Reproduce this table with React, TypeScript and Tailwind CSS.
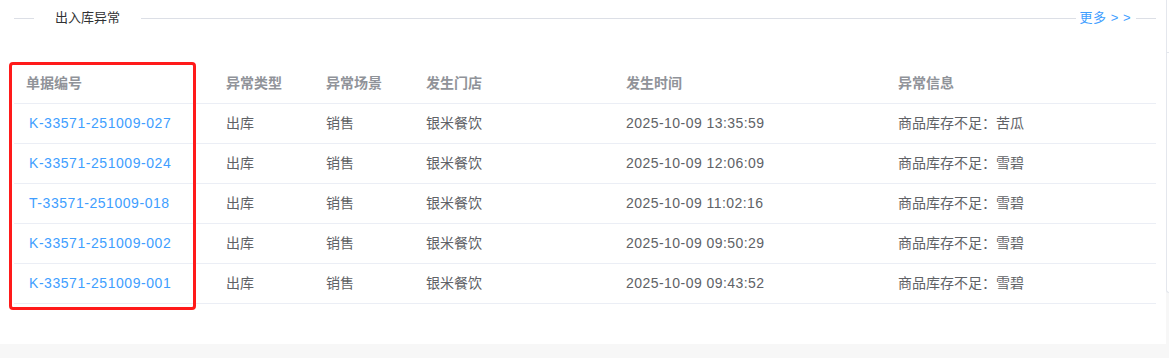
import React from 'react';

const rows = [
  { no: 'K-33571-251009-027', time: '2025-10-09 13:35:59', info: '商品库存不足：苦瓜' },
  { no: 'K-33571-251009-024', time: '2025-10-09 12:06:09', info: '商品库存不足：雪碧' },
  { no: 'T-33571-251009-018', time: '2025-10-09 11:02:16', info: '商品库存不足：雪碧' },
  { no: 'K-33571-251009-002', time: '2025-10-09 09:50:29', info: '商品库存不足：雪碧' },
  { no: 'K-33571-251009-001', time: '2025-10-09 09:43:52', info: '商品库存不足：雪碧' },
];

const cols = ['w-[200px]', 'w-[100px]', 'w-[100px]', 'w-[200px]', 'w-[272px]', 'flex-1'];
const heads = ['单据编号', '异常类型', '异常场景', '发生门店', '发生时间', '异常信息'];

export default function App() {
  return (
    <div
      className="w-[1169px] h-[358px] bg-[#f7f7f7] overflow-hidden"
      style={{ fontFamily: '"Liberation Sans", "Noto Sans CJK SC", sans-serif' }}
    >
      <div className="flex h-[344px]">
        <div className="relative w-[1166px] bg-white pl-[14px] pr-[10px]">
          {/* section title */}
          <div className="flex items-center h-[36px]">
            <div className="w-[20px] h-px bg-[#dcdfe6]" />
            <span className="ml-[21px] mr-[21px] text-[13px] text-[#303133]">出入库异常</span>
            <div className="flex-1 h-px bg-[#dcdfe6]" />
            <span className="ml-[4px] mr-[5px] text-[13px] text-[#409eff] tracking-[0.5px]">更多 &gt; &gt;</span>
            <div className="w-[20px] h-px bg-[#dcdfe6]" />
          </div>

          {/* table */}
          <div className="mt-[28px] text-[14px]">
            <div className="flex h-[40px] items-center border-b border-[#ebeef5] font-bold text-[#909399]">
              {heads.map((h, i) => (
                <div key={h} className={`${cols[i]} px-[12px]`}>{h}</div>
              ))}
            </div>
            {rows.map(r => (
              <div key={r.no} className="flex h-[40px] items-center border-b border-[#ebeef5] text-[#606266]">
                <div className={`${cols[0]} px-[12px]`}>
                  <span className="ml-[3px] text-[#409eff] tracking-[0.55px]">{r.no}</span>
                </div>
                <div className={`${cols[1]} px-[12px]`}>出库</div>
                <div className={`${cols[2]} px-[12px]`}>销售</div>
                <div className={`${cols[3]} px-[12px]`}>银米餐饮</div>
                <div className={`${cols[4]} px-[12px] tracking-[0.45px]`}>{r.time}</div>
                <div className={`${cols[5]} px-[12px]`}>{r.info}</div>
              </div>
            ))}
          </div>

          {/* annotation box */}
          <div className="absolute left-[9px] top-[62px] w-[187px] h-[248px] border-[3px] border-[#ff1a1a] rounded-[4px]" />
        </div>
        <div className="w-[3px] h-[293px] border-l border-b border-[#e4e7ed] rounded-bl-[3px] bg-white">
          <div className="mt-[52px] h-px bg-[#e4e7ed]" />
        </div>
      </div>
    </div>
  );
}
